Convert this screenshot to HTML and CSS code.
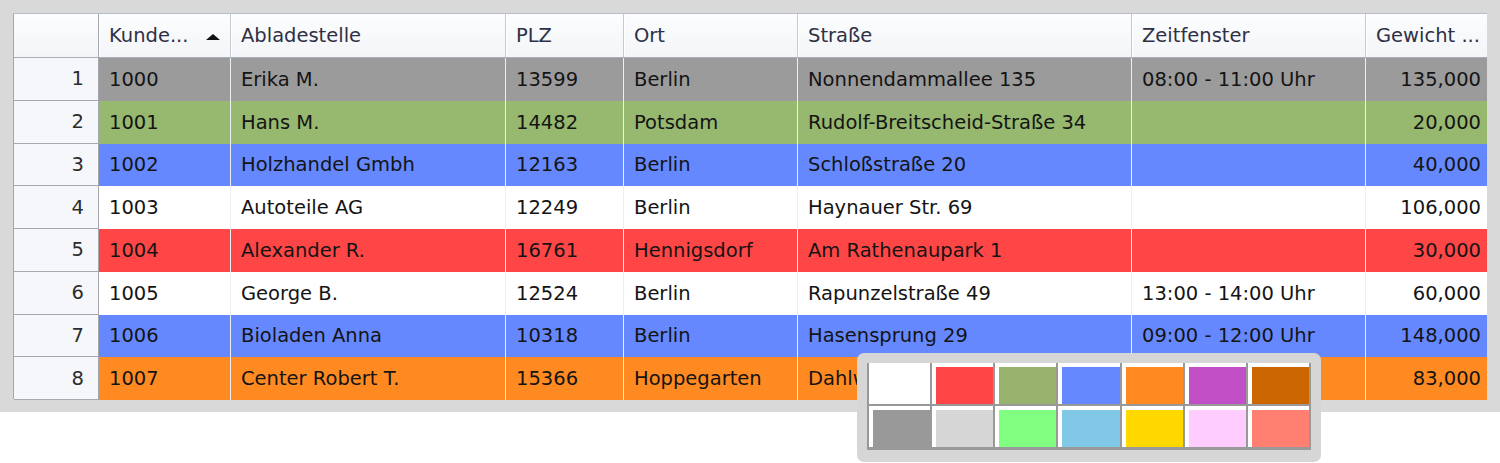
FILE: index.html
```html
<!DOCTYPE html>
<html lang="de">
<head>
<meta charset="utf-8">
<title>Touren</title>
<link rel="stylesheet" href="styles.css">
</head>
<body>
<div class="frame">
  <div class="grid">
    <div class="row head">
      <div class="cell rh"></div>
      <div class="cell hc sorted"><span class="htext">Kunde...</span><span class="arrow"></span></div>
      <div class="cell hc">Abladestelle</div>
      <div class="cell hc">PLZ</div>
      <div class="cell hc">Ort</div>
      <div class="cell hc">Straße</div>
      <div class="cell hc">Zeitfenster</div>
      <div class="cell hc">Gewicht ...</div>
    </div>
    <div class="row c-gray">
      <div class="cell rh">1</div>
      <div class="cell">1000</div>
      <div class="cell">Erika M.</div>
      <div class="cell">13599</div>
      <div class="cell">Berlin</div>
      <div class="cell">Nonnendammallee 135</div>
      <div class="cell">08:00 - 11:00 Uhr</div>
      <div class="cell num">135,000</div>
    </div>
    <div class="row c-green">
      <div class="cell rh">2</div>
      <div class="cell">1001</div>
      <div class="cell">Hans M.</div>
      <div class="cell">14482</div>
      <div class="cell">Potsdam</div>
      <div class="cell">Rudolf-Breitscheid-Straße 34</div>
      <div class="cell"></div>
      <div class="cell num">20,000</div>
    </div>
    <div class="row c-blue">
      <div class="cell rh">3</div>
      <div class="cell">1002</div>
      <div class="cell">Holzhandel Gmbh</div>
      <div class="cell">12163</div>
      <div class="cell">Berlin</div>
      <div class="cell">Schloßstraße 20</div>
      <div class="cell"></div>
      <div class="cell num">40,000</div>
    </div>
    <div class="row c-white">
      <div class="cell rh">4</div>
      <div class="cell">1003</div>
      <div class="cell">Autoteile AG</div>
      <div class="cell">12249</div>
      <div class="cell">Berlin</div>
      <div class="cell">Haynauer Str. 69</div>
      <div class="cell"></div>
      <div class="cell num">106,000</div>
    </div>
    <div class="row c-red">
      <div class="cell rh">5</div>
      <div class="cell">1004</div>
      <div class="cell">Alexander R.</div>
      <div class="cell">16761</div>
      <div class="cell">Hennigsdorf</div>
      <div class="cell">Am Rathenaupark 1</div>
      <div class="cell"></div>
      <div class="cell num">30,000</div>
    </div>
    <div class="row c-white">
      <div class="cell rh">6</div>
      <div class="cell">1005</div>
      <div class="cell">George B.</div>
      <div class="cell">12524</div>
      <div class="cell">Berlin</div>
      <div class="cell">Rapunzelstraße 49</div>
      <div class="cell">13:00 - 14:00 Uhr</div>
      <div class="cell num">60,000</div>
    </div>
    <div class="row c-blue">
      <div class="cell rh">7</div>
      <div class="cell">1006</div>
      <div class="cell">Bioladen Anna</div>
      <div class="cell">10318</div>
      <div class="cell">Berlin</div>
      <div class="cell">Hasensprung 29</div>
      <div class="cell">09:00 - 12:00 Uhr</div>
      <div class="cell num">148,000</div>
    </div>
    <div class="row c-orange last">
      <div class="cell rh">8</div>
      <div class="cell">1007</div>
      <div class="cell">Center Robert T.</div>
      <div class="cell">15366</div>
      <div class="cell">Hoppegarten</div>
      <div class="cell">Dahlwitzer Landstraße 4</div>
      <div class="cell"></div>
      <div class="cell num">83,000</div>
    </div>
  </div>
</div>

<div class="palette">
  <div class="swatches">
    <div class="sw s-white"></div>
    <div class="sw s-red"></div>
    <div class="sw s-olive"></div>
    <div class="sw s-blue"></div>
    <div class="sw s-orange"></div>
    <div class="sw s-purple"></div>
    <div class="sw s-brown"></div>
    <div class="sw s-gray"></div>
    <div class="sw s-silver"></div>
    <div class="sw s-lime"></div>
    <div class="sw s-sky"></div>
    <div class="sw s-gold"></div>
    <div class="sw s-pink"></div>
    <div class="sw s-salmon"></div>
  </div>
</div>
</body>
</html>
```

FILE: styles.css
```css
html, body {
  margin: 0;
  padding: 0;
  background: #ffffff;
}

body {
  width: 1500px;
  height: 463px;
  position: relative;
  overflow: hidden;
  font-family: "DejaVu Sans", Verdana, sans-serif;
  font-size: 19.5px;
  color: #141414;
}

.frame {
  width: 1500px;
  height: 412px;
  box-sizing: border-box;
  padding: 13px;
  background: #d9d9d9;
}

.grid {
  display: flex;
  flex-direction: column;
  width: 1474px;
  height: 386px;
  box-sizing: border-box;
  border-left: 1px solid #a3a6ab;
  border-top: 1px solid #b9bdc4;
  background: #ffffff;
}

.row {
  display: grid;
  grid-template-columns: 85px 132px 275px 118px 174px 334px 234px 121px;
  height: 42.75px;
  flex: none;
}

.row.head {
  height: 43px;
  background: linear-gradient(#fcfdfe, #f3f5f8);
  border-bottom: 1px solid #a9adb4;
}

.cell {
  display: flex;
  align-items: center;
  padding: 0 9px 0 10px;
  white-space: nowrap;
  overflow: hidden;
  border-right: 1px solid #eeeef6;
  min-width: 0;
}

.cell:last-child {
  border-right: none;
}

.cell.num {
  justify-content: flex-end;
  padding-right: 6px;
}

.hc {
  color: #2f3045;
  border-right: 1px solid #c6cad1;
  box-shadow: inset 1px 0 0 #ffffff;
}

.hc.sorted {
  justify-content: space-between;
  padding-right: 10px;
}

.arrow {
  width: 0;
  height: 0;
  border-left: 7px solid transparent;
  border-right: 7px solid transparent;
  border-bottom: 6px solid #111111;
  margin-top: 2px;
}

.rh {
  justify-content: flex-end;
  padding-right: 14px;
  background: #f5f7fa;
  color: #2c2c2c;
  border-right: 1px solid #a3a6ab;
  border-bottom: 1px solid #a7a9ad;
}

.head .rh {
  background: transparent;
  border-bottom: none;
}

.c-gray { background: #9b9b9b; }
.c-green { background: #97b86f; }
.c-blue { background: #6688ff; }
.c-white { background: #ffffff; }
.c-red { background: #ff4646; }
.c-orange { background: #ff8a22; }

/* colour picker popup */
.palette {
  position: absolute;
  left: 857px;
  top: 353px;
  width: 464px;
  height: 109px;
  box-sizing: border-box;
  padding: 10px;
  background: #d6d6d6;
  border-radius: 7px;
}

.swatches {
  display: grid;
  grid-template-columns: repeat(7, 1fr);
  grid-template-rows: 41px 41px;
  gap: 2px;
  padding: 0 2px 3px 2px;
  background: #999999;
}

.sw {
  border-top: 4px solid #ffffff;
  border-left: 4px solid #ffffff;
}

.s-white { background: #ffffff; }
.s-red { background: #ff4646; }
.s-olive { background: #97b36d; }
.s-blue { background: #6688ff; }
.s-orange { background: #ff8a22; }
.s-purple { background: #c150c6; }
.s-brown { background: #cc6600; }
.s-gray { background: #999999; }
.s-silver { background: #d6d6d6; }
.s-lime { background: #80ff80; }
.s-sky { background: #80c8e6; }
.s-gold { background: #ffd800; }
.s-pink { background: #ffccff; }
.s-salmon { background: #ff8070; }
```
